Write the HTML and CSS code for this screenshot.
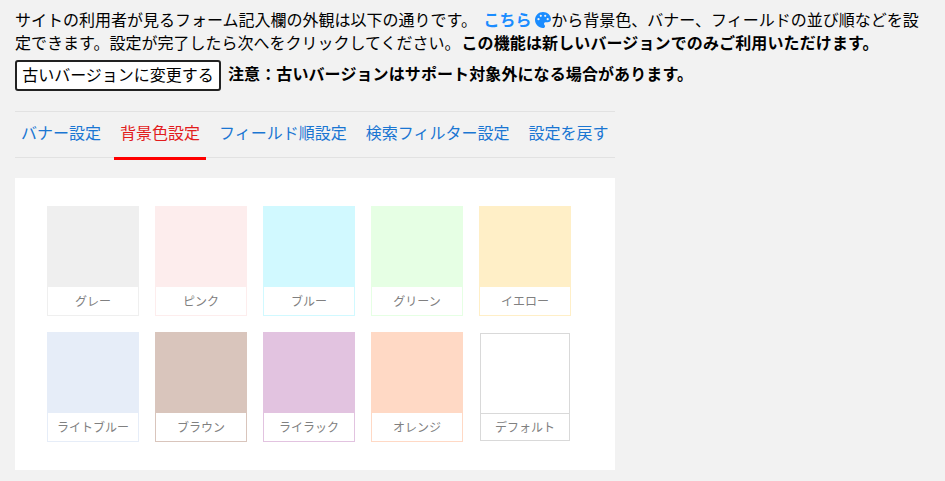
FILE: index.html
```html
<!DOCTYPE html>
<html lang="ja">

<head>
  <meta charset="UTF-8">
  <title>背景色設定</title>
  <link rel="stylesheet" href="styles.css">
</head>

<body>

  <div class="wrap">
    <p class="intro">サイトの利用者が見るフォーム記入欄の外観は以下の通りです。 <a class="here" href="#">こちら
      <svg class="palette" viewBox="0 0 16 16"><path fill-rule="evenodd" d="M8 0C3.600 0 0 3.400 0 7.800 0 12.300 3.600 16 8 16c1.300 0 2-.8 2-1.800 0-.5-.2-.9-.5-1.200-.3-.3-.5-.7-.5-1.100 0-.9.7-1.600 1.600-1.600h1.900C14.600 10.300 16 9 16 7.200 16 3.200 12.400 0 8 0zM3.500 8.300a1.100 1.100 0 1 1 0-2.200 1.100 1.100 0 0 1 0 2.200zM5.800 4.900a1.100 1.100 0 1 1 0-2.200 1.100 1.100 0 0 1 0 2.200zm4.400 0a1.100 1.100 0 1 1 0-2.200 1.100 1.100 0 0 1 0 2.200zm2.500 3.400a1.100 1.100 0 1 1 0-2.200 1.100 1.100 0 0 1 0 2.200z"/></svg></a>から背景色、バナー、フィールドの並び順などを設定できます。設定が完了したら次へをクリックしてください。<b class="note-new">この機能は新しいバージョンでのみご利用いただけます。</b></p>

    <div class="old-row">
      <button class="old-btn">古いバージョンに変更する</button>
      <b class="old-note">注意：古いバージョンはサポート対象外になる場合があります。</b>
    </div>

    <ul class="tabs">
      <li><a href="#">バナー設定</a></li>
      <li class="active"><a href="#">背景色設定</a></li>
      <li><a href="#">フィールド順設定</a></li>
      <li><a href="#">検索フィルター設定</a></li>
      <li><a href="#">設定を戻す</a></li>
    </ul>

    <div class="panel">
      <div class="swatch gray"><div class="chip"></div><div class="name">グレー</div></div>
      <div class="swatch pink"><div class="chip"></div><div class="name">ピンク</div></div>
      <div class="swatch blue"><div class="chip"></div><div class="name">ブルー</div></div>
      <div class="swatch green"><div class="chip"></div><div class="name">グリーン</div></div>
      <div class="swatch yellow"><div class="chip"></div><div class="name">イエロー</div></div>
      <div class="swatch lightblue"><div class="chip"></div><div class="name">ライトブルー</div></div>
      <div class="swatch brown"><div class="chip"></div><div class="name">ブラウン</div></div>
      <div class="swatch lilac"><div class="chip"></div><div class="name">ライラック</div></div>
      <div class="swatch orange"><div class="chip"></div><div class="name">オレンジ</div></div>
      <div class="swatch default"><div class="chip"></div><div class="name">デフォルト</div></div>
    </div>
  </div>

</body>

</html>
```

FILE: styles.css
```css
body {
  margin: 0;
  background: #f2f2f2;
  color: #000;
  font-family: "Noto Sans CJK JP", "Noto Sans", sans-serif;
  font-size: 16px;
}

.wrap {
  padding: 8px 15px 0;
}

.intro {
  margin: 0;
  width: 915px;
  line-height: 23px;
}

.here {
  margin-left: 3px;
  color: #1a8cff;
  font-weight: bold;
  text-decoration: none;
}

.palette {
  width: 16px;
  height: 16px;
  fill: #1a8cff;
  vertical-align: -2px;
}

.note-new {
  margin-left: 1px;
  letter-spacing: 0.12px;
}

.old-row {
  display: flex;
  align-items: flex-start;
  gap: 7px;
  margin-top: 6px;
}

.old-btn {
  width: 206px;
  height: 31px;
  padding: 0 0 4px;
  background: #fff;
  border: 2px solid #222;
  border-radius: 3px;
  color: #000;
  font: inherit;
}

.old-note {
  letter-spacing: 0.1px;
  line-height: 26px;
}

.tabs {
  display: flex;
  list-style: none;
  width: 600px;
  height: 45px;
  margin: 20px 0 0;
  padding: 0;
  border-top: 1px solid #e2e2e2;
  border-bottom: 1px solid #e2e2e2;
}

.tabs li {
  flex: none;
  padding: 0 6px;
  margin-right: 7px;
  line-height: 40px;
  white-space: nowrap;
}

.tabs li:last-child {
  margin-right: 0;
}

.tabs a {
  color: #1a76d2;
  text-decoration: none;
}

.tabs .active {
  height: 45px;
  border-bottom: 3px solid #f00;
}

.tabs .active a {
  color: #e21c1c;
}

.panel {
  display: grid;
  grid-template-columns: repeat(5, 92px);
  column-gap: 16px;
  row-gap: 16px;
  width: 600px;
  height: 292px;
  box-sizing: border-box;
  margin-top: 20px;
  padding: 28px 32px;
  background: #fff;
}

.swatch {
  height: 110px;
  box-sizing: border-box;
  border: 1px solid var(--c);
}

.chip {
  height: 80px;
  background: var(--c);
}

.name {
  color: #808080;
  font-size: 12px;
  line-height: 27px;
  text-align: center;
}

.gray { --c: #efefef; }
.pink { --c: #fdeded; }
.blue { --c: #d1f9ff; }
.green { --c: #e6ffe4; }
.yellow { --c: #ffefc7; }
.lightblue { --c: #e6edf8; }
.brown { --c: #d9c5bc; }
.lilac { --c: #e2c3e0; }
.orange { --c: #ffd9c5; }

.default {
  --c: #d9d9d9;
  width: 90px;
  height: 108px;
  margin: 1px;
}

.default .chip {
  height: 79px;
  background: #fff;
  border-bottom: 1px solid #d9d9d9;
}

.default .name {
  line-height: 26px;
}
```
